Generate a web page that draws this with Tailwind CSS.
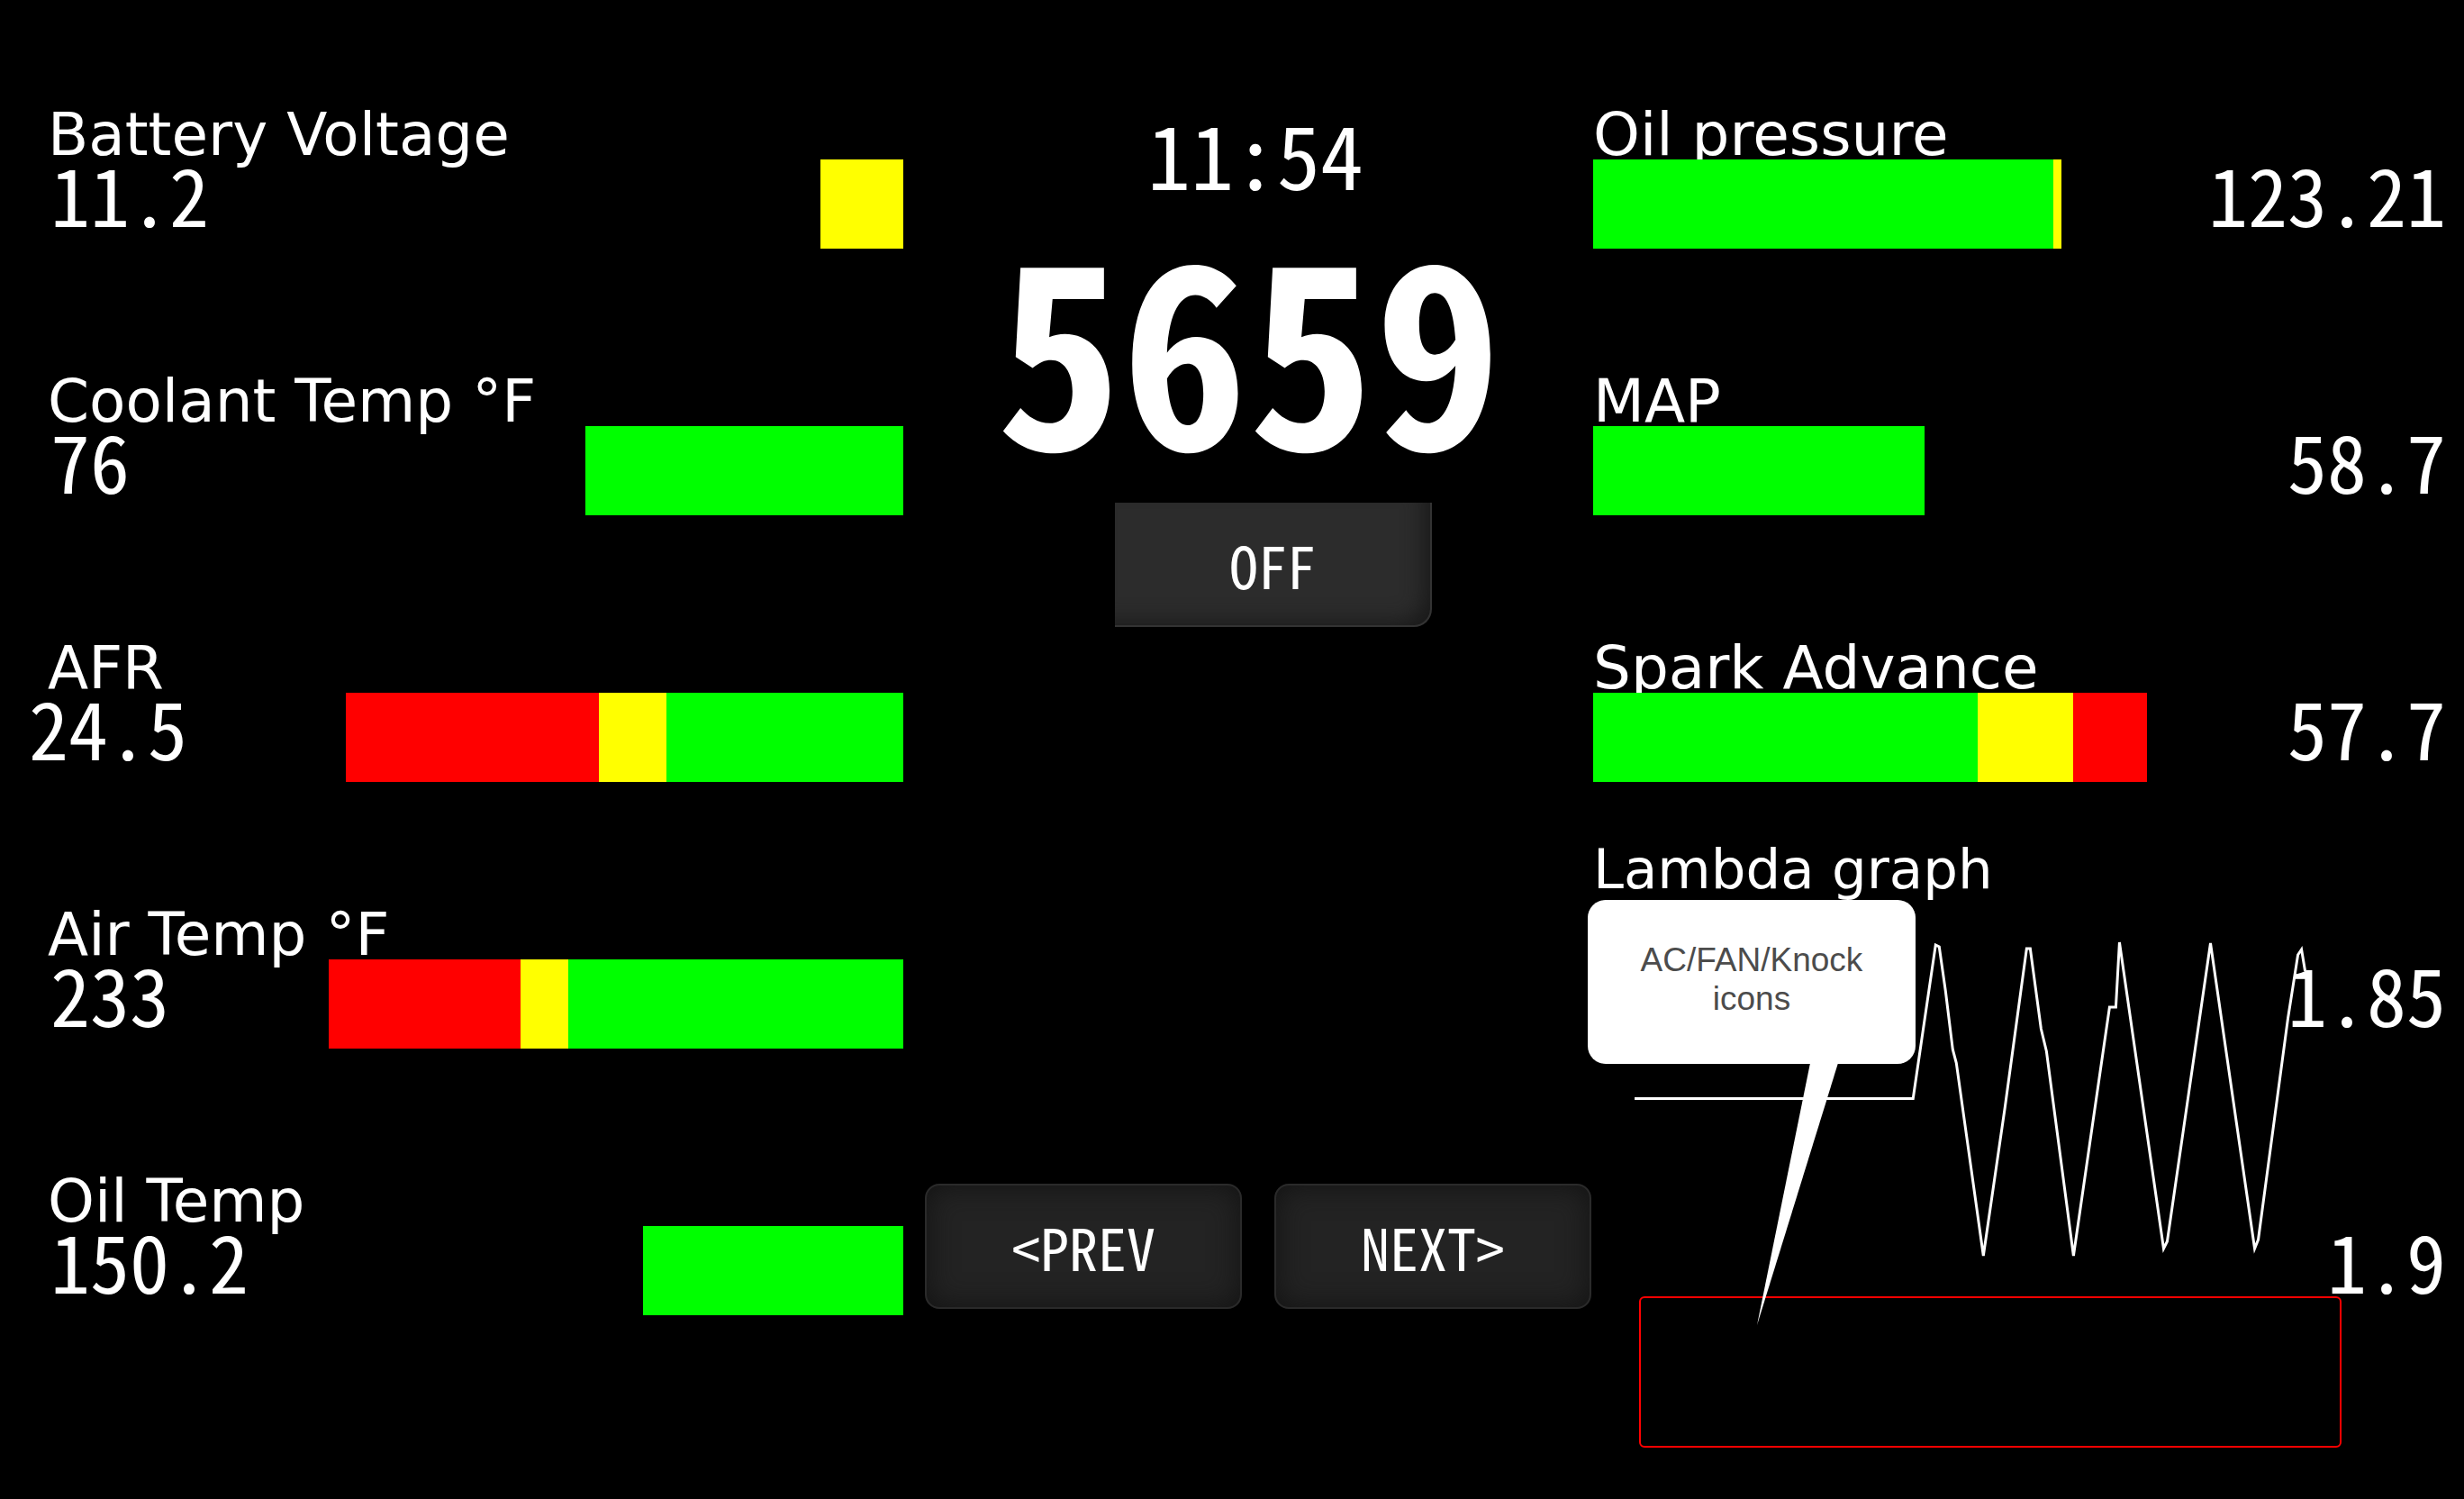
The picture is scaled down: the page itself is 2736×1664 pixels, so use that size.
<!DOCTYPE html>
<html lang="en">
<head>
<meta charset="utf-8">
<title>Engine dashboard</title>
<script src="https://cdn.jsdelivr.net/npm/@tailwindcss/browser@4"></script>
</head>
<body class="min-h-screen overflow-x-hidden bg-black text-white font-['DejaVu_Sans',sans-serif]">
<main class="grid grid-cols-[1003fr_766fr_967fr] pt-[118px]">

  <!-- Left gauges: bars grow from the right edge -->
  <section class="min-w-0">
    <article class="h-[296px]">
      <h2 class="h-[59px] pl-[53px] text-[66px] leading-[64px] whitespace-nowrap">Battery Voltage</h2>
      <div class="flex h-[99px] items-start justify-between">
        <output class="pl-[56px] font-['Noto_Sans_Mono_CJK_SC','Noto_Sans_CJK_SC',monospace] text-[88px] leading-[74px]">11.2</output>
        <div class="flex h-full" style="width:9.2%"><i class="flex-1 bg-[#ff0]"></i></div>
      </div>
    </article>
    <article class="h-[296px]">
      <h2 class="h-[59px] pl-[53px] text-[66px] leading-[64px] whitespace-nowrap">Coolant Temp °F</h2>
      <div class="flex h-[99px] items-start justify-between">
        <output class="pl-[56px] font-['Noto_Sans_Mono_CJK_SC','Noto_Sans_CJK_SC',monospace] text-[88px] leading-[74px]">76</output>
        <div class="flex h-full" style="width:35.2%"><i class="flex-1 bg-[#0f0]"></i></div>
      </div>
    </article>
    <article class="h-[296px]">
      <h2 class="h-[59px] pl-[53px] text-[66px] leading-[64px] whitespace-nowrap">AFR</h2>
      <div class="flex h-[99px] items-start justify-between">
        <output class="pl-8 font-['Noto_Sans_Mono_CJK_SC','Noto_Sans_CJK_SC',monospace] text-[88px] leading-[74px]">24.5</output>
        <div class="flex h-full" style="width:61.7%"><i class="bg-[#f00]" style="width:45.4%"></i><i class="bg-[#ff0]" style="width:12.1%"></i><i class="flex-1 bg-[#0f0]"></i></div>
      </div>
    </article>
    <article class="h-[296px]">
      <h2 class="h-[59px] pl-[53px] text-[66px] leading-[64px] whitespace-nowrap">Air Temp °F</h2>
      <div class="flex h-[99px] items-start justify-between">
        <output class="pl-[56px] font-['Noto_Sans_Mono_CJK_SC','Noto_Sans_CJK_SC',monospace] text-[88px] leading-[74px]">233</output>
        <div class="flex h-full" style="width:63.6%"><i class="bg-[#f00]" style="width:33.4%"></i><i class="bg-[#ff0]" style="width:8.3%"></i><i class="flex-1 bg-[#0f0]"></i></div>
      </div>
    </article>
    <article class="h-[296px]">
      <h2 class="h-[59px] pl-[53px] text-[66px] leading-[64px] whitespace-nowrap">Oil Temp</h2>
      <div class="flex h-[99px] items-start justify-between">
        <output class="pl-[56px] font-['Noto_Sans_Mono_CJK_SC','Noto_Sans_CJK_SC',monospace] text-[88px] leading-[74px]">150.2</output>
        <div class="flex h-full" style="width:28.8%"><i class="flex-1 bg-[#0f0]"></i></div>
      </div>
    </article>
  </section>

  <!-- Clock, tachometer and page controls -->
  <section class="min-w-0 font-['Noto_Sans_Mono_CJK_SC','Noto_Sans_CJK_SC',monospace]">
    <time class="block pl-4 text-center text-[96px] leading-[104px]">11:54</time>
    <output class="mt-4 block text-center text-[280px] leading-[280px] font-bold">5659</output>
    <div class="mt-[40px] flex justify-center pl-14">
      <button class="h-[138px] w-[352px] rounded-br-[20px] border-r-2 border-b-2 border-[#333] bg-[#2c2c2c] text-[64px] leading-[64px] shadow-[inset_-16px_-12px_24px_-10px_#191919]">OFF</button>
    </div>
    <div class="mt-[618px] flex justify-end gap-9 pr-0.5">
      <button class="h-[139px] w-[352px] rounded-[16px] border-2 border-[#2a2a2a] bg-[#232323] pb-0.5 text-[64px] leading-[64px] shadow-[inset_0_0_32px_#131313]">&lt;PREV</button>
      <button class="h-[139px] w-[352px] rounded-[16px] border-2 border-[#2a2a2a] bg-[#232323] pb-0.5 text-[64px] leading-[64px] shadow-[inset_0_0_32px_#131313]">NEXT&gt;</button>
    </div>
  </section>

  <!-- Right gauges: bars grow from the left edge -->
  <section class="min-w-0">
    <article class="h-[296px]">
      <h2 class="h-[59px] text-[66px] leading-[64px] whitespace-nowrap">Oil pressure</h2>
      <div class="relative flex h-[99px] items-start justify-between pr-5">
        <div class="flex h-full" style="width:54.9%"><i class="flex-1 bg-[#0f0]"></i><i class="bg-[#ff0]" style="width:1.7%"></i></div>
        <output class="font-['Noto_Sans_Mono_CJK_SC','Noto_Sans_CJK_SC',monospace] text-[88px] leading-[74px]">123.21</output>
      </div>
    </article>
    <article class="h-[296px]">
      <h2 class="h-[59px] text-[66px] leading-[64px] whitespace-nowrap">MAP</h2>
      <div class="relative flex h-[99px] items-start justify-between pr-5">
        <div class="flex h-full" style="width:38.9%"><i class="flex-1 bg-[#0f0]"></i></div>
        <output class="font-['Noto_Sans_Mono_CJK_SC','Noto_Sans_CJK_SC',monospace] text-[88px] leading-[74px]">58.7</output>
      </div>
    </article>
    <article>
      <h2 class="h-[59px] text-[66px] leading-[64px] whitespace-nowrap">Spark Advance</h2>
      <div class="relative flex h-[99px] items-start justify-between pr-5">
        <div class="flex h-full" style="width:64.9%"><i class="flex-1 bg-[#0f0]"></i><i class="bg-[#ff0]" style="width:17.3%"></i><i class="bg-[#f00]" style="width:13.3%"></i></div>
        <output class="font-['Noto_Sans_Mono_CJK_SC','Noto_Sans_CJK_SC',monospace] text-[88px] leading-[74px]">57.7</output>
      </div>
    </article>
    <article class="relative mt-[63px]">
      <h2 class="h-[59px] text-[61px] leading-[68px] whitespace-nowrap">Lambda graph</h2>
      <div class="grid h-[449px]">
        <svg class="col-start-1 row-start-1 h-[449px] w-[86%]" viewBox="1769 990 831 449" preserveAspectRatio="none" fill="none" stroke="#fff" stroke-width="3" role="img" aria-label="Lambda trace">
          <path d="M1815 1219.500H2124L2134 1151L2149 1049L2153 1051L2160 1100L2168 1165L2172 1180L2202 1394L2226 1229L2250 1053H2254L2266 1142L2272 1167L2302 1394L2342 1118H2349L2353 1046L2402 1386L2406 1378L2454 1047L2503 1386L2507 1376L2540 1130L2551 1060L2555 1054L2559 1078"/>
        </svg>
        <div class="col-start-1 row-start-1 flex flex-col items-end gap-[222px] pt-[75px] pr-5 font-['Noto_Sans_Mono_CJK_SC','Noto_Sans_CJK_SC',monospace] text-[88px] leading-[74px]">
          <output>1.85</output>
          <output>1.9</output>
        </div>
      </div>
      <div class="ml-[51px] h-[168px] w-[780px] rounded-[6px] border-2 border-[#f00]"></div>

      <!-- Callout pointing at the indicator area -->
      <div class="absolute top-[68px] -left-[6px] w-[364px]">
        <p class="flex h-[182px] items-center justify-center rounded-[20px] bg-white px-10 pb-1.5 text-center font-['Liberation_Sans',sans-serif] text-[37px] leading-[43px] text-[#4c4c4c]">AC/FAN/Knock icons</p>
        <svg class="block h-[290px] w-full" viewBox="0 0 364 290" fill="#fff"><path d="M247 -1H278L188 290Z"/></svg>
      </div>
    </article>
  </section>
</main>
</body>
</html>
